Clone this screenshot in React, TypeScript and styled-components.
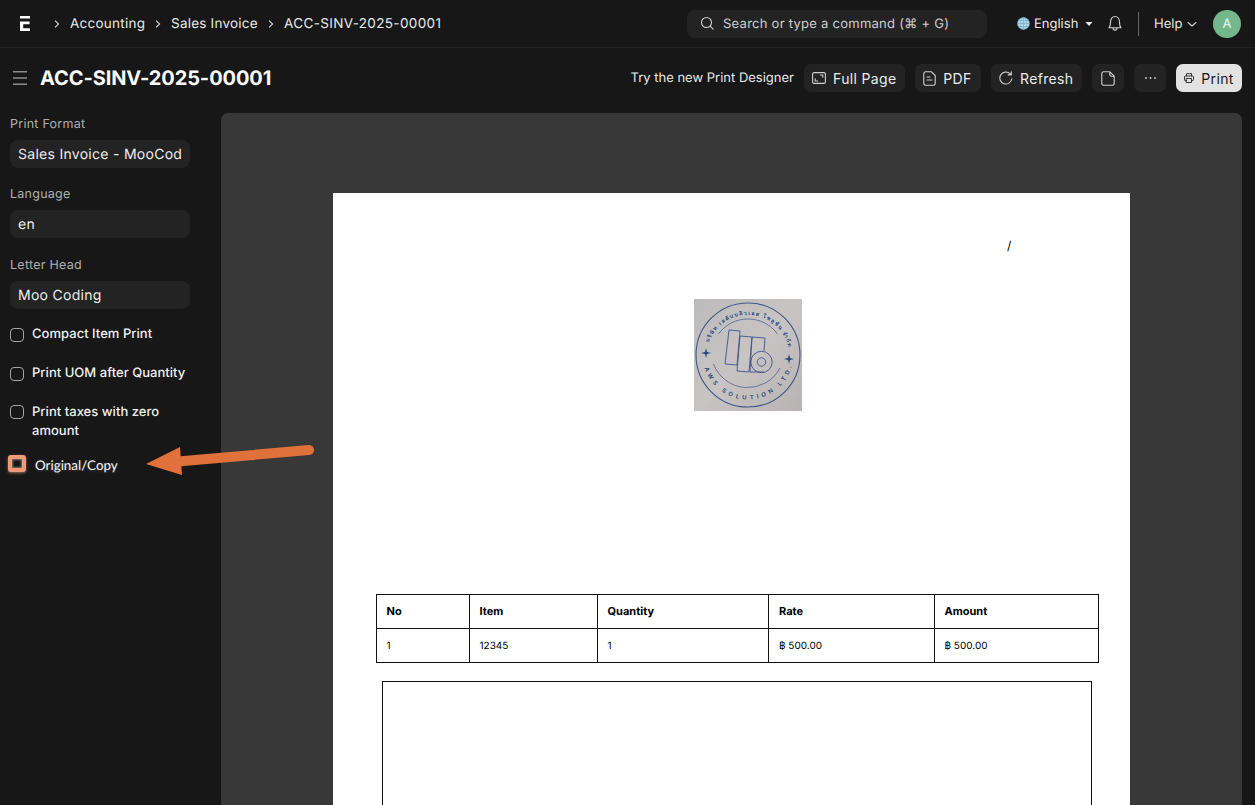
import React from "react";
import styled, { createGlobalStyle } from "styled-components";

const GlobalStyle = createGlobalStyle`
  * { box-sizing: border-box; }
  html, body { margin: 0; height: 100%; overflow: hidden; background: #171717; }
  body { font-family: Inter, "Noto Sans", sans-serif; font-size: 13px; color: #f0f0f0; text-rendering: geometricPrecision; }
`;

const Page = styled.div`
  height: 805px;
  display: flex;
  flex-direction: column;
  overflow: hidden;
  position: relative;
`;

const Navbar = styled.header`
  flex: none;
  height: 48px;
  border-bottom: 1px solid #232323;
  display: flex;
  align-items: center;
  padding: 0 14px 0 20px;
  svg { flex: none; display: block; }
`;

const Label = styled.span<{ $size?: number; $ls?: number; $w?: number; $color?: string }>`
  flex: none;
  white-space: nowrap;
  font-size: ${(p) => p.$size ?? 13}px;
  letter-spacing: ${(p) => p.$ls ?? 0}px;
  color: ${(p) => p.$color ?? "#e8e8e8"};
  ${(p) => (p.$w ? `width: ${p.$w}px;` : "")}
`;

const Crumbs = styled.nav`
  display: flex;
  align-items: center;
  margin-left: 24px;
  flex: 1;
`;

const Chevron = styled.svg`
  width: 6px;
  height: 8px;
  margin-right: 10px;
`;

const Search = styled.div`
  flex: none;
  width: 300px;
  height: 28px;
  border-radius: 8px;
  background: #232323;
  display: flex;
  align-items: center;
  padding-left: 13px;
  gap: 8px;
`;

const NavRight = styled.div`
  display: flex;
  align-items: center;
  width: 224px;
  margin-left: 30px;
`;

const Language = styled.div`
  display: flex;
  align-items: center;
  gap: 4px;
  margin-right: 15px;
`;

const Divider = styled.span`
  width: 1px;
  height: 24px;
  background: #666;
  margin: 0 15px 0 16px;
`;

const Avatar = styled.span`
  width: 28px;
  height: 28px;
  border-radius: 50%;
  background: #74b78d;
  color: #e9f7ee;
  font-size: 13px;
  display: flex;
  align-items: center;
  justify-content: center;
  margin-left: auto;
`;

const PageHead = styled.div`
  flex: none;
  height: 60px;
  display: flex;
  align-items: center;
  padding: 0 13px;
`;

const Title = styled.h1`
  margin: 0 auto 0 13px;
  font-size: 20px;
  font-weight: 700;
  letter-spacing: -0.1px;
  color: #fafafa;
  white-space: nowrap;
`;

const Button = styled.button<{ $w: number; $primary?: boolean }>`
  flex: none;
  width: ${(p) => p.$w}px;
  height: 28px;
  margin-left: 10px;
  padding: 0;
  border: 0;
  border-radius: 7px;
  background: ${(p) => (p.$primary ? "#e2e2e2" : "#232323")};
  color: ${(p) => (p.$primary ? "#171717" : "#ebebeb")};
  font: 400 14px Inter, sans-serif;
  letter-spacing: 0.33px;
  display: flex;
  align-items: center;
  justify-content: center;
  gap: 7px;
  white-space: nowrap;
  svg { flex: none; }
`;

const Body = styled.main`
  flex: 1;
  display: flex;
  min-height: 0;
`;

const Sidebar = styled.aside`
  flex: none;
  width: 220px;
  padding: 8px 30px 0 10px;
`;

const Field = styled.label`
  display: block;
  height: 70.4px;
`;

const FieldLabel = styled.span`
  display: block;
  height: 24px;
  line-height: 18px;
  font-size: 12.5px;
  letter-spacing: 0.26px;
  color: #afafaf;
`;

const FieldValue = styled.span`
  display: block;
  height: 28px;
  line-height: 29px;
  border-radius: 8px;
  background: #232323;
  padding: 0 8px;
  font-size: 14px;
  letter-spacing: 0.28px;
  color: #ededed;
  white-space: nowrap;
  overflow: hidden;
`;

const Checks = styled.div`
  margin-top: -1.7px;
`;

const CheckRow = styled.label<{ $h?: number }>`
  display: flex;
  align-items: flex-start;
  height: ${(p) => p.$h ?? 38.7}px;
  font-size: 13px;
  font-weight: 500;
  line-height: 19.5px;
  letter-spacing: 0.03px;
  color: #f0f0f0;
`;

const Box = styled.span`
  flex: none;
  width: 14px;
  height: 14px;
  border: 1px solid #a3a3a3;
  border-radius: 4px;
  margin: 2.5px 8px 0 0;
`;

const Marked = styled.div`
  display: flex;
  align-items: center;
  margin-left: -2px;
  height: 19px;
`;

const MarkedBox = styled.span`
  width: 18px;
  height: 17px;
  border: 4px solid #ee9a76;
  border-radius: 3px;
  background: #171717;
  box-shadow: 0 1px 3px rgba(190, 150, 130, 0.7), inset 0 0 2px 1px #777;
  margin: -3px 9px 0 0;
`;

const MarkedText = styled.span`
  font-family: Lato, sans-serif;
  font-size: 13.4px;
  color: #f5f5f5;
  text-shadow: 0 1px 3px rgba(255, 255, 255, 0.2);
`;

const Preview = styled.section`
  flex: none;
  width: 1021.5px;
  margin: 5px 0 0 0.5px;
  background: #383838;
  border-radius: 7px 7px 0 0;
  padding: 80px 112px 0 112.5px;
  display: flex;
  overflow: hidden;
`;

const Paper = styled.div`
  flex: 1;
  background: #fff;
  color: #000;
  display: flex;
  flex-direction: column;
`;

const Slash = styled.div`
  margin: 44px 0 0 674px;
  height: 62px;
  font-size: 12px;
  line-height: 17px;
`;

const Stamp = styled.svg`
  display: block;
  flex: none;
  width: 108px;
  height: 112px;
  margin-left: 361px;
`;

const Table = styled.div`
  margin: 183px 0 0 42.5px;
  width: 723.5px;
  flex: none;
  display: grid;
  grid-template-columns: 93px 128px 171.5px 165.5px 1fr;
  grid-template-rows: 34px 34px;
  border-right: 1px solid #111;
  border-bottom: 1px solid #111;
`;

const Cell = styled.div<{ $head?: boolean }>`
  border-left: 1px solid #111;
  border-top: 1px solid #111;
  padding-left: 10px;
  line-height: ${(p) => (p.$head ? 33 : 34)}px;
  font-size: ${(p) => (p.$head ? 11 : 10)}px;
  font-weight: ${(p) => (p.$head ? 700 : 400)};
`;

const Notes = styled.div`
  margin: 18px 0 0 49px;
  width: 710px;
  flex: 1;
  border: 1px solid #111;
  border-bottom: 0;
`;

const Arrow = styled.svg`
  position: absolute;
  left: 140px;
  top: 436px;
`;

const Sep = () => (
  <Chevron viewBox="0 0 6 8" fill="none" stroke="#d4d4d4" strokeWidth="1.1">
    <path d="M1 .7 4.6 4 1 7.3" />
  </Chevron>
);

const line = { fill: "none", stroke: "#d0d0d0", strokeWidth: 1.1, strokeLinecap: "round", strokeLinejoin: "round" } as const;

const columns = ["No", "Item", "Quantity", "Rate", "Amount"];
const values = ["1", "12345", "1", "฿ 500.00", "฿ 500.00"];
const fields = [
  ["Print Format", "Sales Invoice - MooCod"],
  ["Language", "en"],
  ["Letter Head", "Moo Coding"],
];

const CompanyStamp = () => (
  <Stamp viewBox="0 0 108 112">
    <defs>
      <linearGradient id="photo" x1="0" y1="0" x2="1" y2="1">
        <stop offset="0" stopColor="#bdbabb" />
        <stop offset=".5" stopColor="#c7c4c3" />
        <stop offset="1" stopColor="#b7b3b2" />
      </linearGradient>
      <path id="arcTop" d="M14.8 43.500 A41.500 41.500 0 0 1 95 51" />
      <path id="arcBottom" d="M10.500 69 A45.500 45.500 0 0 0 98 66" />
    </defs>
    <rect width="108" height="112" fill="url(#photo)" />
    <g fill="none" stroke="#40568a" strokeWidth=".9">
      <circle cx="54" cy="56" r="52" strokeWidth="1.1" />
      <path d="M24.500 35 A36.500 36.500 0 0 1 83.500 35" strokeWidth=".7" />
      <path d="M19.500 65 A36.500 36.500 0 0 0 86 69" strokeWidth=".7" />
      <path d="M35 31 46 32 43 66 31 65Z" />
      <path d="M46 37 58 38 55 73 43 72Z" />
      <path d="M58 38 71 39 70 52M58 38 56 73H70" />
      <circle cx="67.500" cy="63" r="10.700" />
      <circle cx="67.500" cy="63" r="4.200" />
    </g>
    <g fill="#27457f">
      <path d="m12 49 1 4 4 1-4 1-1 4-1-4-4-1 4-1zM95 55l1 4 4 1-4 1-1 4-1-4-4-1 4-1z" />
      <g fontFamily="Inter, 'Noto Sans', sans-serif" fontWeight="600">
        <text fontSize="5.2"><textPath href="#arcTop" textLength="107">บริษัท เอดับบลิวเอส โซลูชั่น จำกัด</textPath></text>
        <text fontSize="5.900"><textPath href="#arcBottom" textLength="116">AWS SOLUTION LTD.</textPath></text>
      </g>
    </g>
  </Stamp>
);

export default function App() {
  return (
    <Page>
      <GlobalStyle />
      <Navbar>
        <svg width="10" height="15" viewBox="0 0 10 15" fill="#fff">
          <path d="M0 0h10v2.600H0zM0 5.500h9.600v2.800H3.200v3.900H10V15H0z" />
        </svg>
        <Crumbs>
          <Sep />
          <Label $w={85} $size={13.5} $ls={0.26}>Accounting</Label>
          <Sep />
          <Label $w={97} $size={13.5} $ls={0.22}>Sales Invoice</Label>
          <Sep />
          <Label $size={13.5} $ls={0.35}>ACC-SINV-2025-00001</Label>
        </Crumbs>
        <Search>
          <svg width="15" height="15" viewBox="0 0 15 15" {...line}>
            <circle cx="6.500" cy="6.500" r="5" />
            <path d="m10.200 10.200 3 3" />
          </svg>
          <Label $ls={0.26} $color="#cfcfcf">Search or type a command (⌘ + G)</Label>
        </Search>
        <NavRight>
          <Language>
            <svg width="13" height="13" viewBox="0 0 13 13" fill="none" stroke="#6ba3bd" strokeWidth=".6">
              <circle cx="6.500" cy="6.500" r="6" fill="#b4daea" />
              <ellipse cx="6.500" cy="6.500" rx="3" ry="6" />
              <path d="M6.500.5v12M.5 6.500h12M1.500 3.500h10M1.500 9.500h10" />
            </svg>
            <Label $w={47}>English</Label>
            <svg width="8" height="4" viewBox="0 0 8 4" fill="#e8e8e8"><path d="M.5 0h7L4 4z" /></svg>
          </Language>
          <svg width="14" height="17" viewBox="0 0 14 17" {...line}>
            <path d="M1 12.700c1.500-1.200 1.500-2.800 1.500-5.600C2.500 4 4.300 1.500 7 1.500s4.500 2.500 4.500 5.600c0 2.800 0 4.400 1.500 5.600zM5 13c0 2.800 4 2.800 4 0" />
          </svg>
          <Divider />
          <Label $w={33}>Help</Label>
          <svg width="10" height="6" viewBox="0 0 10 6" {...line}><path d="m1 1.500 4 3.500L9 1.500" /></svg>
          <Avatar>A</Avatar>
        </NavRight>
      </Navbar>
      <PageHead>
        <svg width="14" height="14" viewBox="0 0 14 14" fill="#8c8c8c">
          <path d="M0 0h14v1.400H0zM0 6.300h14v1.400H0zM0 12.600h14V14H0z" />
        </svg>
        <Title>ACC-SINV-2025-00001</Title>
        <Label>Try the new Print Designer</Label>
        <Button $w={100.5}>
          <svg width="14" height="12" viewBox="0 0 14 12" {...line}>
            <rect x=".6" y=".6" width="12.800" height="10.800" rx="1.500" />
            <path d="M8.300 3h2.500v2.300M5.700 9H3.200V6.700" />
          </svg>
          Full Page
        </Button>
        <Button $w={66}>
          <svg width="13" height="15" viewBox="0 0 13 15" {...line}>
            <path d="M2.500.8h6l3.700 3.700v8a1.700 1.700 0 0 1-1.700 1.700h-8A1.700 1.700 0 0 1 .8 12.500v-10A1.700 1.700 0 0 1 2.500.8zM4 6h3M4 9h5" />
          </svg>
          PDF
        </Button>
        <Button $w={91.5}>
          <svg width="14" height="14" viewBox="0 0 14 14" {...line}>
            <path d="M12.800 7.800A6 6 0 1 1 11 2.700l1 1M12.300.8v3.100H9.200" />
          </svg>
          Refresh
        </Button>
        <Button $w={32}>
          <svg width="14" height="15" viewBox="0 0 14 15" {...line}>
            <path d="M2.500.8h6.300l4.400 4.400v7.300a1.700 1.700 0 0 1-1.700 1.700h-9A1.700 1.700 0 0 1 .8 12.500v-10A1.700 1.700 0 0 1 2.500.8zM8.800.8v2.700a1.700 1.700 0 0 0 1.700 1.700h2.700" />
          </svg>
        </Button>
        <Button $w={32}>
          <svg width="11" height="2" viewBox="0 0 11 2" fill="#d0d0d0"><circle cx="1" cy="1" r=".9" /><circle cx="5.500" cy="1" r=".9" /><circle cx="10" cy="1" r=".9" /></svg>
        </Button>
        <Button $w={66} $primary>
          <svg width="10" height="10" viewBox="0 0 10 10" {...line} stroke="#222" strokeWidth={0.9}>
            <path d="M2.500 3V.6h5V3M2.500 7.500H1.200a.7.7 0 0 1-.7-.7V3.700c0-.4.300-.7.700-.7h7.600c.4 0 .7.300.7.700v3.100c0 .4-.3.700-.7.700H7.500M2.500 5.500h5v4h-5z" />
          </svg>
          Print
        </Button>
      </PageHead>
      <Body>
        <Sidebar>
          {fields.map(([name, value]) => (
            <Field key={name}>
              <FieldLabel>{name}</FieldLabel>
              <FieldValue>{value}</FieldValue>
            </Field>
          ))}
          <Checks>
            <CheckRow><Box />Compact Item Print</CheckRow>
            <CheckRow><Box />Print UOM after Quantity</CheckRow>
            <CheckRow $h={52.5}><Box />Print taxes with zero amount</CheckRow>
            <Marked>
              <MarkedBox />
              <MarkedText>Original/Copy</MarkedText>
            </Marked>
          </Checks>
        </Sidebar>
        <Preview>
          <Paper>
            <Slash>/</Slash>
            <CompanyStamp />
            <Table>
              {columns.map((c) => <Cell key={c} $head>{c}</Cell>)}
              {values.map((v, i) => <Cell key={i}>{v}</Cell>)}
            </Table>
            <Notes />
          </Paper>
        </Preview>
      </Body>
      <Arrow width="180" height="44" viewBox="0 0 180 44">
        <path d="M38 25.500 169 14" stroke="#e0713a" strokeWidth="10" strokeLinecap="round" />
        <path d="M6 28 40 11 42 39z" fill="#e0713a" />
      </Arrow>
    </Page>
  );
}
